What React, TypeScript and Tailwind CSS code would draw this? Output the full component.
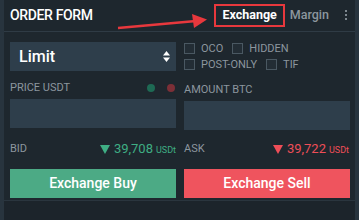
function Check({ label }: { label: string }) {
  return (
    <label className="flex items-center gap-[6px]">
      <span className="w-[11px] h-[11px] border border-[#4a5862] bg-[#232d35]" />
      <span className="text-[11px] leading-none text-[#8c969e]">{label}</span>
    </label>
  );
}

function Down({ color }: { color: string }) {
  return (
    <svg width="10" height="9" viewBox="0 0 10 9" className="mr-[4px] self-center">
      <polygon points="0,0 10,0 5,9" fill={color} />
    </svg>
  );
}

export default function App() {
  return (
    <div
      className="relative flex w-[359px] h-[220px] bg-[#1e272e] overflow-hidden"
      style={{ fontFamily: "Roboto, 'Liberation Sans', sans-serif" }}
    >
      <div className="w-[4px] bg-[#28343e]" />
      <div className="flex-1 flex flex-col">
        {/* header */}
        <div className="h-[32px] flex items-center border-b border-[#2f3b45] pl-[6px] pr-[8px]">
          <span className="text-[14px] font-medium text-white tracking-tight">ORDER FORM</span>
          <div className="ml-auto flex items-center h-full">
            <span className="border-2 border-[#e8383d] h-[23px] px-[6px] flex items-center text-[12.5px] font-bold text-white mt-[-1px]">
              Exchange
            </span>
            <span className="ml-[5px] text-[12.5px] font-medium text-[#8c969e]">Margin</span>
            <span className="ml-[16px] flex flex-col gap-[2px] mt-[-2px]">
              <span className="w-[2px] h-[2px] bg-[#7d878f]" />
              <span className="w-[2px] h-[2px] bg-[#7d878f]" />
              <span className="w-[2px] h-[2px] bg-[#7d878f]" />
            </span>
          </div>
        </div>

        {/* body */}
        <div className="grid grid-cols-2 gap-x-[8px] pl-[6px] pr-[5px] pt-[10px]">
          <div className="flex flex-col">
            <div className="h-[29px] bg-[#2e3e4b] flex items-center pl-[9px] pr-[6px]">
              <span className="text-[16px] font-medium text-white">Limit</span>
              <svg width="7" height="11" viewBox="0 0 7 11" className="ml-auto">
                <polygon points="3.5,0 7,4.5 0,4.5" fill="#fff" />
                <polygon points="0,6.5 7,6.5 3.5,11" fill="#fff" />
              </svg>
            </div>
            <div className="mt-[10px] flex items-center h-[14px]">
              <span className="text-[11px] text-[#8c969e]">PRICE USDT</span>
              <span className="ml-auto w-[8px] h-[8px] rounded-full bg-[#1e6a54]" />
              <span className="ml-[12px] mr-[1px] w-[8px] h-[8px] rounded-full bg-[#7c2f37]" />
            </div>
            <div className="mt-[4px] h-[29px] bg-[#2e3e4b]" />
          </div>
          <div className="flex flex-col">
            <div className="flex flex-col gap-[5px] pt-[1px]">
              <div className="flex items-center gap-[9px]">
                <Check label="OCO" />
                <Check label="HIDDEN" />
              </div>
              <div className="flex items-center gap-[9px]">
                <Check label="POST-ONLY" />
                <Check label="TIF" />
              </div>
            </div>
            <div className="mt-[13px] flex items-center h-[14px]">
              <span className="text-[11px] text-[#8c969e]">AMOUNT BTC</span>
            </div>
            <div className="mt-[4px] h-[29px] bg-[#2e3e4b]" />
          </div>

          <div className="mt-[12px] flex items-center h-[14px]">
            <span className="text-[11px] text-[#8c969e]">BID</span>
            <span className="ml-auto flex items-baseline text-[#3fae84]">
              <Down color="#3fae84" />
              <span className="text-[13px]">39,708</span>
              <span className="ml-[3px] text-[9px]">USDt</span>
            </span>
          </div>
          <div className="mt-[12px] flex items-center h-[14px]">
            <span className="text-[11px] text-[#8c969e]">ASK</span>
            <span className="ml-auto flex items-baseline text-[#ef4e58] pr-[1px]">
              <Down color="#ef4e58" />
              <span className="text-[13px]">39,722</span>
              <span className="ml-[3px] text-[9px]">USDt</span>
            </span>
          </div>

          <button className="mt-[13px] h-[29px] bg-[#4caa85] text-white text-[14px] font-medium">
            Exchange Buy
          </button>
          <button className="mt-[13px] h-[29px] bg-[#ef545e] text-white text-[14px] font-medium">
            Exchange Sell
          </button>
        </div>
        <div className="mt-[2px] border-t border-[#2a353e] flex-1 bg-[#1c242b]" />
      </div>
      <div className="w-[4px] bg-[#28343e]" />

      {/* annotation arrow */}
      <svg className="absolute left-0 top-0 pointer-events-none" width="359" height="40">
        <line x1="118" y1="28" x2="196" y2="21" stroke="#e8383d" strokeWidth="2.5" />
        <polygon points="192,14 207,19.5 194,28" fill="#e8383d" />
      </svg>
    </div>
  );
}
